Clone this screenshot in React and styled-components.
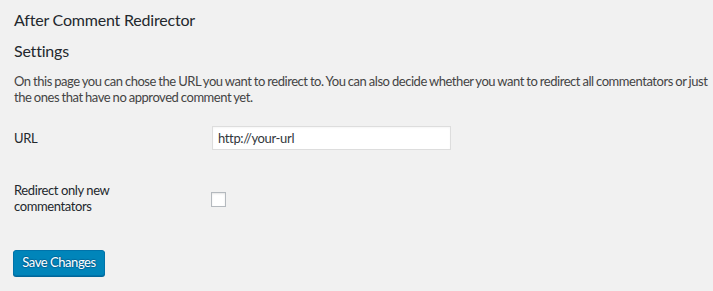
import React from "react";
import styled, { createGlobalStyle } from "styled-components";

const GlobalStyle = createGlobalStyle`
  html, body {
    margin: 0;
    padding: 0;
    background: #f1f1f1;
  }
  body {
    font-family: "Lato", "Open Sans", sans-serif;
    font-size: 13px;
    color: #444;
  }
`;

const Wrap = styled.div`
  display: flex;
  flex-direction: column;
  align-items: flex-start;
  padding: 10px 0 0 14px;
  min-height: 281px;
`;

const Heading = styled.h2`
  margin: ${(p) => p.$mt || 0}px 0 0;
  font-size: 16px;
  font-weight: 400;
  line-height: 20px;
  letter-spacing: -0.2px;
  color: #23282d;
`;

const Intro = styled.p`
  margin: 13px 0 0;
  line-height: 15.7px;
  letter-spacing: -0.45px;
  word-spacing: -0.5px;
  color: #444;
`;

const Line = styled.span`
  display: block;
  white-space: nowrap;
`;

const FormTable = styled.div`
  display: flex;
  flex-direction: column;
  gap: 33px;
  margin-top: 21px;
`;

const Row = styled.div`
  display: grid;
  grid-template-columns: 197px auto;
  align-items: center;
`;

const Label = styled.label`
  color: #23282d;
  line-height: 15.7px;
  letter-spacing: -0.4px;
  max-width: ${(p) => p.$max || 190}px;
`;

const TextInput = styled.input`
  box-sizing: border-box;
  width: 239px;
  height: 24px;
  margin: 0 0 0 1px;
  padding: 0 5px;
  border: 1px solid #ddd;
  border-radius: 0;
  background: #fff;
  box-shadow: inset 0 1px 2px rgba(0, 0, 0, 0.04);
  font-family: inherit;
  font-size: 13px;
  letter-spacing: -0.35px;
  color: #32373c;
  outline: none;
`;

const Checkbox = styled.input.attrs({ type: "checkbox" })`
  appearance: none;
  -webkit-appearance: none;
  box-sizing: border-box;
  width: 15px;
  height: 15px;
  margin: 1px 0 0;
  border: 1px solid #b4b9be;
  background: #fff;
  box-shadow: inset 0 1px 2px rgba(0, 0, 0, 0.1);
`;

const Submit = styled.div`
  margin-top: 35px;
`;

const PrimaryButton = styled.button`
  box-sizing: border-box;
  height: 26px;
  width: 92px;
  margin-left: -1px;
  padding: 0 0 1px;
  border: 1px solid #0073aa;
  border-radius: 3px;
  background: #0085ba;
  box-shadow: 0 1px 0 #006799;
  color: #fff;
  font-family: inherit;
  font-size: 13px;
  letter-spacing: -0.45px;
  line-height: 22px;
  text-shadow: 0 -1px 1px #006799, 1px 0 1px #006799, 0 1px 1px #006799, -1px 0 1px #006799;
  cursor: pointer;
`;

export default function App() {
  return (
    <>
      <GlobalStyle />
      <Wrap>
        <Heading>After Comment Redirector</Heading>
        <Heading $mt={11}>Settings</Heading>
        <Intro>
          <Line>
            On this page you can chose the URL you want to redirect to. You can also decide whether you want to redirect all commentators or just
          </Line>
          <Line>the ones that have no approved comment yet.</Line>
        </Intro>
        <FormTable>
          <Row>
            <Label htmlFor="acr-url">URL</Label>
            <TextInput id="acr-url" type="text" defaultValue="http://your-url" />
          </Row>
          <Row>
            <Label htmlFor="acr-new" $max={110}>
              Redirect only new commentators
            </Label>
            <Checkbox id="acr-new" />
          </Row>
        </FormTable>
        <Submit>
          <PrimaryButton type="button">Save Changes</PrimaryButton>
        </Submit>
      </Wrap>
    </>
  );
}
